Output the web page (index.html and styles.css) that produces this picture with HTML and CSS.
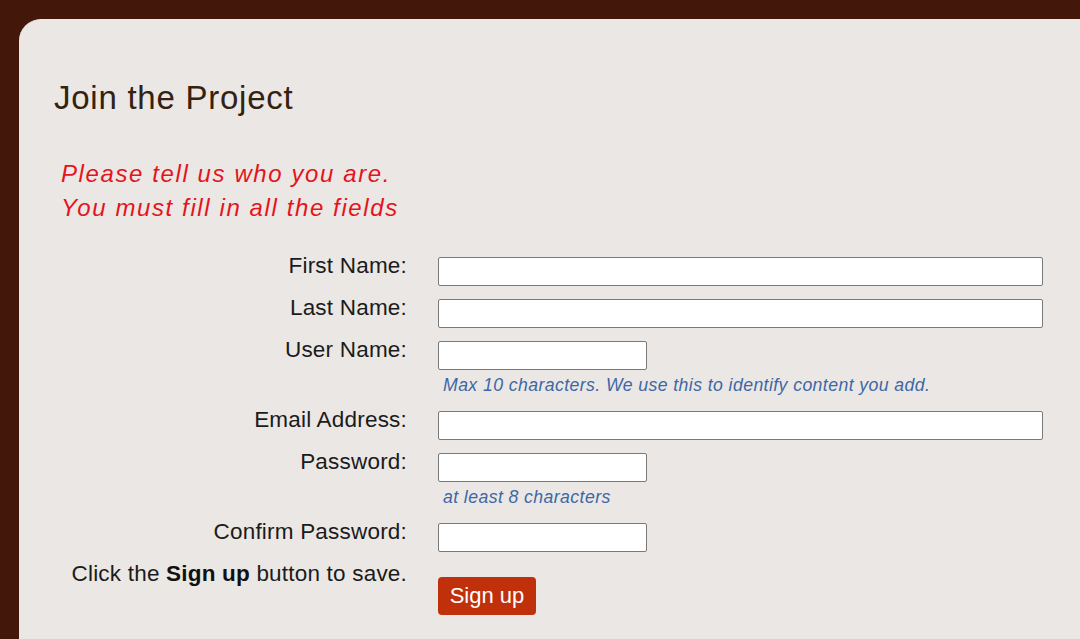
FILE: index.html
```html
<!DOCTYPE html>
<html lang="en">
<head>
  <meta charset="UTF-8" />
  <title>Join the Project</title>
  <link rel="stylesheet" href="styles.css">
</head>
<body>
  <div class="panel">
    <h1>Join the Project</h1>

    <!-- message -->
    <p class="notice">Please tell us who you are.<br>You must fill in all the fields</p>

    <form class="signup" onsubmit="return false">
      <label for="firstName">First Name:</label>
      <div class="control"><input id="firstName" type="text" /></div>

      <label for="lastName">Last Name:</label>
      <div class="control"><input id="lastName" type="text" /></div>

      <label for="userName">User Name:</label>
      <div class="control">
        <input id="userName" class="short" type="text" maxlength="10" />
        <div class="hint">Max 10 characters. We use this to identify content you add.</div>
      </div>

      <label for="email">Email Address:</label>
      <div class="control"><input id="email" type="email" /></div>

      <label for="password">Password:</label>
      <div class="control">
        <input id="password" class="short" type="password" />
        <div class="hint">at least 8 characters</div>
      </div>

      <label for="confirm">Confirm Password:</label>
      <div class="control"><input id="confirm" class="short" type="password" /></div>

      <label class="save-note">Click the <b>Sign up</b> button to save.</label>
      <div class="control"><button type="submit">Sign up</button></div>
    </form>
  </div>
</body>
</html>
```

FILE: styles.css
```css
html, body {
  height: 100%;
}
body {
  margin: 0;
  background: #43170a;
  font-family: "Liberation Sans", Arial, sans-serif;
  overflow: hidden;
}
.panel {
  margin: 19px 0 0 19px;
  min-height: 100%;
  background: #ebe7e4;
  border-top: 1px solid #f6e7dc;
  border-top-left-radius: 22px;
  padding: 58px 37px 40px 35px;
  box-sizing: border-box;
}
h1 {
  margin: 0;
  font-size: 33px;
  letter-spacing: 0.75px;
  font-weight: normal;
  color: #33220f;
  line-height: 40px;
}
.notice {
  margin: 39px 0 0 7px;
  color: #e5141c;
  font-style: italic;
  font-size: 24px;
  letter-spacing: 1.6px;
  line-height: 34px;
}
.signup {
  display: grid;
  grid-template-columns: 353px 1fr;
  column-gap: 31px;
  margin-top: 32px;
}
.signup label {
  text-align: right;
  font-size: 22.5px;
  letter-spacing: 0.2px;
  line-height: 22px;
  color: #1b1b1b;
  margin-top: -2px;
}
.control {
  margin-bottom: 13px;
}
.control input {
  display: block;
  width: 100%;
  height: 29px;
  box-sizing: border-box;
  margin: 0;
  border: 1px solid #7a7a7a;
  border-radius: 2px;
  background: #fff;
  font-size: 16px;
}
.control input.short {
  width: 209px;
}
.hint {
  color: #3d68a6;
  font-style: italic;
  font-size: 17.7px;
  letter-spacing: 0.4px;
  line-height: 25px;
  padding: 3px 0 0 5px;
}
.save-note b {
  color: #111;
}
button {
  margin-top: 12px;
  height: 38px;
  width: 98px;
  background-color: #c0300b;
  color: #fff;
  border: none;
  border-radius: 4px;
  font-family: "Liberation Sans", Arial, sans-serif;
  font-size: 22px;
  cursor: pointer;
}
button:hover {
  background-color: #a32808;
}
```
